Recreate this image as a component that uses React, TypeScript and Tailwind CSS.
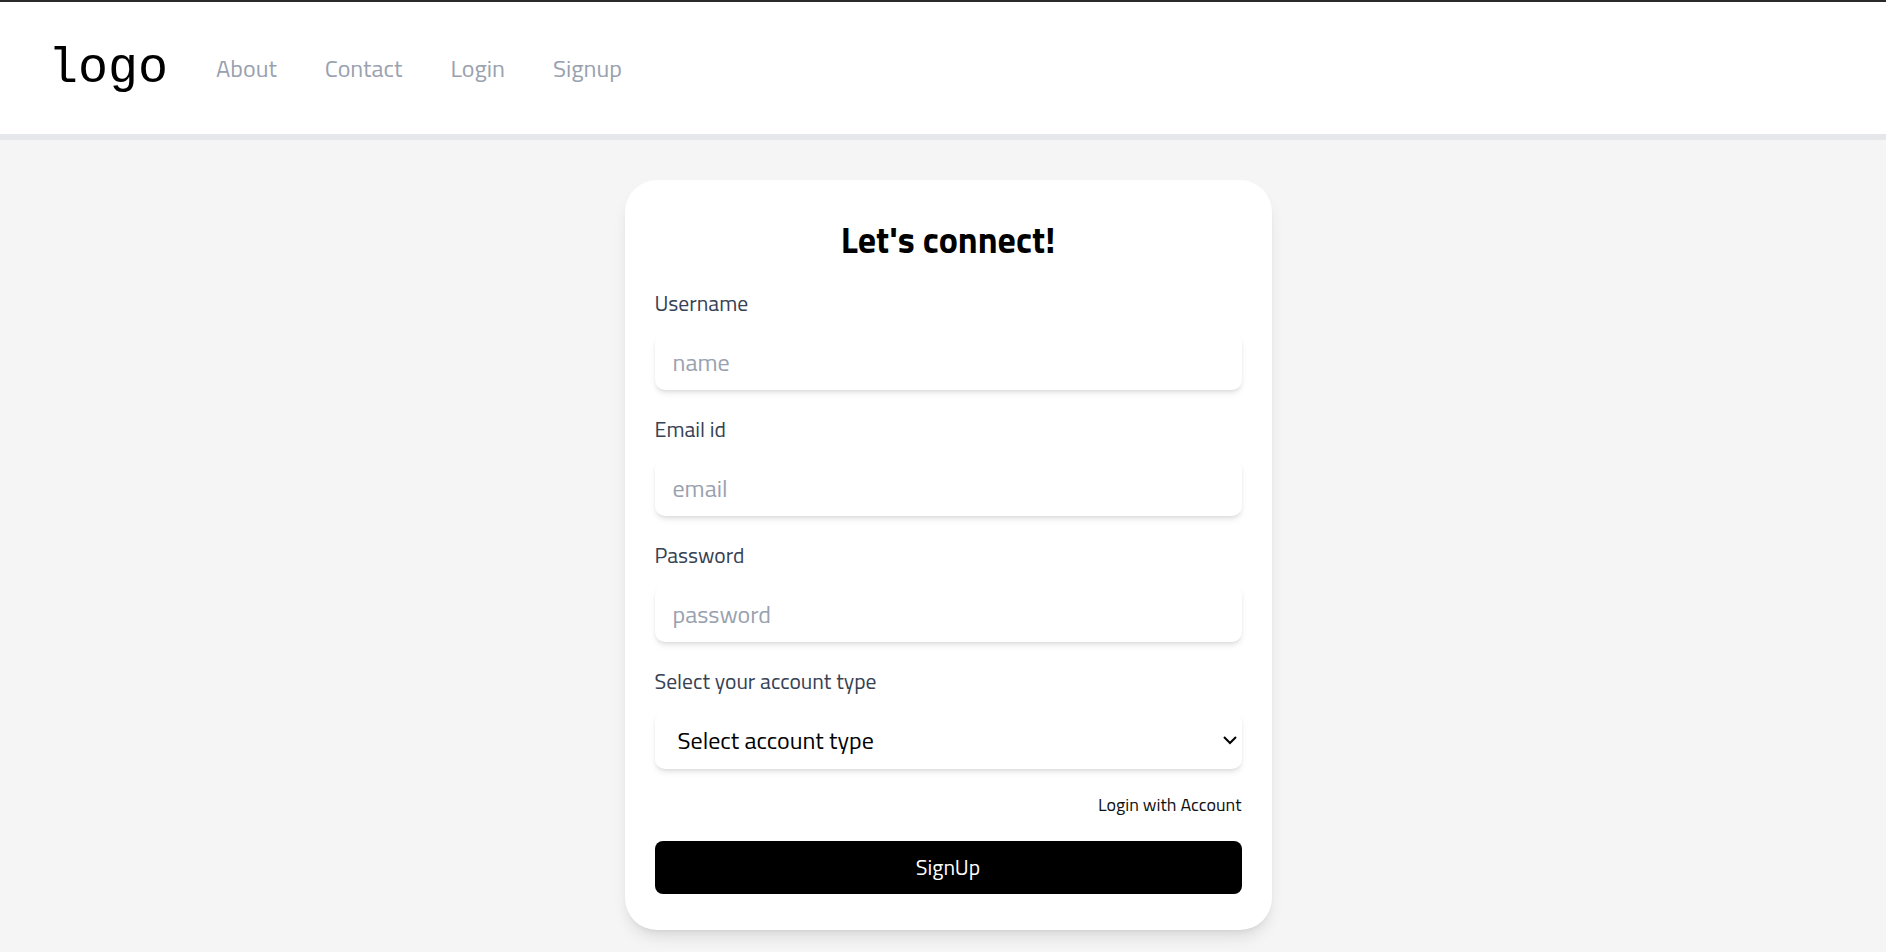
import React from 'react';

const sans = { fontFamily: '"Titillium Web", Roboto, "Noto Sans", sans-serif' };

function Header() {
  return (
    <header className="h-[140px] bg-white border-t-2 border-t-[#2a2a2a] border-b-[6px] border-b-gray-200 flex items-center px-12 gap-12">
      <span className="text-[50px] text-black" style={{ fontFamily: '"Liberation Mono", monospace' }}>
        logo
      </span>
      <nav className="flex items-center gap-12 text-2xl text-gray-400">
        <a href="#">About</a>
        <a href="#">Contact</a>
        <a href="#">Login</a>
        <a href="#">Signup</a>
      </nav>
    </header>
  );
}

function Field({ label, placeholder, type = 'text' }: { label: string; placeholder: string; type?: string }) {
  return (
    <div>
      <label className="block text-[21.6px] leading-[30px] text-gray-700 mb-[15px]">{label}</label>
      <input
        type={type}
        placeholder={placeholder}
        className="w-full h-[57px] bg-white rounded-[10px] shadow-md px-[18px] text-2xl text-black placeholder:text-gray-400 outline-none"
      />
    </div>
  );
}

export default function App() {
  return (
    <div className="min-h-screen bg-[#f5f5f5]" style={sans}>
      <Header />
      <main className="flex justify-center pt-10 pl-[10px]">
        <form className="w-[647px] bg-white rounded-[32px] shadow-lg px-[30px] pt-9 pb-9 flex flex-col gap-6">
          <h1 className="text-4xl leading-[48px] font-bold text-black text-center">Let's connect!</h1>
          <Field label="Username" placeholder="name" />
          <Field label="Email id" placeholder="email" type="email" />
          <Field label="Password" placeholder="password" type="password" />
          <div>
            <label className="block text-[21.6px] leading-[30px] text-gray-700 mb-[15px]">Select your account type</label>
            <div className="relative">
              <select
                defaultValue=""
                className="w-full h-[58px] appearance-none bg-white rounded-[10px] shadow-md pl-[23px] pr-10 text-2xl text-black outline-none"
              >
                <option value="" disabled>
                  Select account type
                </option>
                <option value="user">User</option>
                <option value="admin">Admin</option>
              </select>
              <svg
                className="absolute right-[3px] top-1/2 -translate-y-1/2 pointer-events-none"
                width="18"
                height="18"
                viewBox="0 0 24 24"
                fill="none"
                stroke="black"
                strokeWidth="2.8"
                strokeLinecap="square"
                strokeLinejoin="miter"
              >
                <path d="M5 9l7 7 7-7" />
              </svg>
            </div>
          </div>
          <div className="text-right text-lg leading-6 text-[#111]">
            <a href="#">Login with Account</a>
          </div>
          <button type="button" className="h-[53px] w-full bg-black text-white text-[21.6px] rounded-lg">
            SignUp
          </button>
        </form>
      </main>
    </div>
  );
}
